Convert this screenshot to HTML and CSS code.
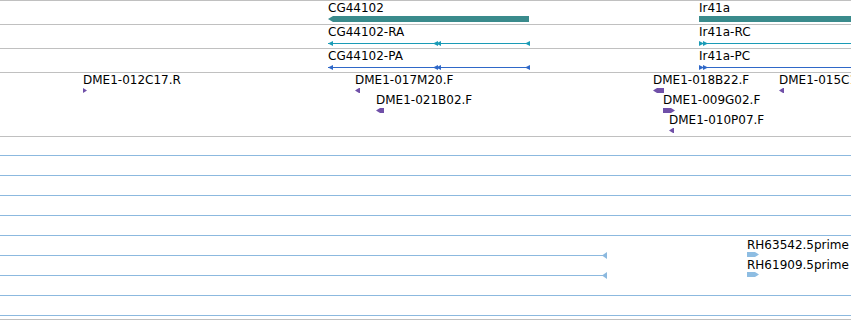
FILE: index.html
```html
<!DOCTYPE html>
<html lang="en">
<head>
    <meta charset="UTF-8">
    <title>Genome Tracks</title>
    <link rel="stylesheet" href="styles.css">
</head>
<body>
    <div class="browser">
        <!-- gene track -->
        <div class="track gene-track">
            <div class="label" style="left:328px">CG44102</div>
            <div class="gene-bar arrow-left" style="left:328px;width:201px"></div>
            <div class="label" style="left:699px">Ir41a</div>
            <div class="gene-bar" style="left:699px;width:160px"></div>
        </div>

        <!-- transcript track -->
        <div class="track tx-track rna">
            <div class="label" style="left:328px">CG44102-RA</div>
            <div class="tx-line" style="left:328px;width:201px"></div>
            <div class="head left" style="left:328px"></div>
            <div class="head left" style="left:433px"></div>
            <div class="head left" style="left:436px"></div>
            <div class="head left" style="left:525px"></div>

            <div class="label" style="left:699px">Ir41a-RC</div>
            <div class="tx-line" style="left:699px;width:160px"></div>
            <div class="head right" style="left:699px"></div>
            <div class="head right" style="left:703px"></div>
        </div>

        <!-- protein track -->
        <div class="track tx-track protein">
            <div class="label" style="left:328px">CG44102-PA</div>
            <div class="tx-line" style="left:328px;width:201px"></div>
            <div class="head left" style="left:328px"></div>
            <div class="head left" style="left:433px"></div>
            <div class="head left" style="left:436px"></div>
            <div class="head left" style="left:525px"></div>

            <div class="label" style="left:699px">Ir41a-PC</div>
            <div class="tx-line" style="left:699px;width:160px"></div>
            <div class="head right" style="left:699px"></div>
            <div class="head right" style="left:703px"></div>
        </div>

        <!-- EST track -->
        <div class="track est-track">
            <div class="label" style="left:83px;top:0">DME1-012C17.R</div>
            <div class="est right" style="left:83px;top:15px;width:4px"></div>

            <div class="label" style="left:355px;top:0">DME1-017M20.F</div>
            <div class="est left" style="left:355px;top:15px;width:5px"></div>
            <div class="label" style="left:376px;top:20px">DME1-021B02.F</div>
            <div class="est left" style="left:376px;top:35px;width:8px"></div>

            <div class="label" style="left:653px;top:0">DME1-018B22.F</div>
            <div class="est left" style="left:653px;top:15px;width:11px"></div>
            <div class="label" style="left:663px;top:20px">DME1-009G02.F</div>
            <div class="est right" style="left:663px;top:35px;width:12px"></div>
            <div class="label" style="left:669px;top:40px">DME1-010P07.F</div>
            <div class="est left" style="left:669px;top:55px;width:5px"></div>

            <div class="label" style="left:779px;top:0">DME1-015C17.F</div>
            <div class="est left" style="left:779px;top:15px;width:5px"></div>
        </div>

        <!-- cDNA track -->
        <div class="track cdna-track">
            <div class="row first"></div>
            <div class="row"></div>
            <div class="row"></div>
            <div class="row"></div>
            <div class="row"></div>
            <div class="row partial">
                <div class="label" style="left:747px;top:2px">RH63542.5prime</div>
                <div class="cdna" style="left:747px;top:16px;width:12px"></div>
                <div class="cdna-line" style="width:607px"></div>
                <div class="cdna-head" style="left:602px"></div>
            </div>
            <div class="row partial">
                <div class="label" style="left:747px;top:2px">RH61909.5prime</div>
                <div class="cdna" style="left:747px;top:16px;width:12px"></div>
                <div class="cdna-line" style="width:607px"></div>
                <div class="cdna-head" style="left:602px"></div>
            </div>
            <div class="row"></div>
            <div class="row"></div>
        </div>
    </div>
</body>
</html>
```

FILE: styles.css
```css
body {
    margin: 0;
    background: #fff;
    font-family: "DejaVu Sans", sans-serif;
    font-size: 12px;
    line-height: 14px;
    color: #000;
}
.browser {
    width: 851px;
    height: 320px;
    overflow: hidden;
}
.track {
    position: relative;
    border-top: 1px solid #c0c0c0;
    overflow: hidden;
}
.gene-track,
.tx-track {
    height: 23px;
}
.est-track {
    height: 63px;
}
.cdna-track {
    height: 182px;
    border-bottom: 1px solid #c0c0c0;
    overflow: visible;
}
.label {
    position: absolute;
    top: 0;
    white-space: nowrap;
}

/* gene bars */
.gene-bar {
    position: absolute;
    top: 15px;
    height: 6px;
    background: #3a8b8c;
}
.arrow-left {
    clip-path: polygon(0 50%, 5px 0, 100% 0, 100% 100%, 5px 100%);
}

/* transcripts */
.rna { color: #000; }
.rna .tx-line, .rna .head { background: #1a9bb6; }
.protein .tx-line, .protein .head { background: #2f68c8; }
.tx-line {
    position: absolute;
    top: 18px;
    height: 1px;
}
.head {
    position: absolute;
    top: 16px;
    width: 5px;
    height: 5px;
}
.head.left {
    clip-path: polygon(0 50%, 100% 0, 100% 100%);
}
.head.right {
    clip-path: polygon(0 0, 100% 50%, 0 100%);
}

/* ESTs */
.est {
    position: absolute;
    height: 5px;
    background: #7050a8;
}
.est.left {
    clip-path: polygon(0 50%, 4px 0, 100% 0, 100% 100%, 4px 100%);
}
.est.right {
    clip-path: polygon(0 0, calc(100% - 4px) 0, 100% 50%, calc(100% - 4px) 100%, 0 100%);
}

/* cDNA rows */
.row {
    position: relative;
    height: 19px;
    border-bottom: 1px solid #8cb9df;
}
.row.first {
    height: 18px;
}
.row.partial {
    border-bottom-color: transparent;
}
.cdna {
    position: absolute;
    height: 5px;
    background: #8ebde2;
    clip-path: polygon(0 0, calc(100% - 4px) 0, 100% 50%, calc(100% - 4px) 100%, 0 100%);
}
.cdna-line {
    position: absolute;
    left: 0;
    top: 19px;
    height: 1px;
    background: #8cb9df;
}
.cdna-head {
    position: absolute;
    top: 16px;
    width: 5px;
    height: 7px;
    background: #8cb9df;
    clip-path: polygon(0 50%, 100% 0, 100% 100%);
}
```
